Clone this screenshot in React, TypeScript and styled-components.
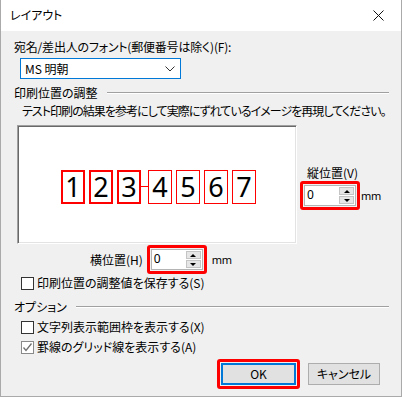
import React from 'react';
import styled, { createGlobalStyle, css } from 'styled-components';

const GlobalStyle = createGlobalStyle`
  html, body {
    margin: 0;
    padding: 0;
    background: #ffffff;
  }
  body {
    font-family: "Noto Sans CJK JP", "Noto Sans", sans-serif;
    font-size: 12px;
    color: #000;
    font-feature-settings: "palt";
  }
`;

const digits = ['1', '2', '3', '4', '5', '6', '7'];

const ChevronDown = () => (
  <svg width="10" height="6" viewBox="0 0 10 6">
    <polyline points="0.5,0.5 5,5 9.5,0.5" fill="none" stroke="#333" strokeWidth="1" />
  </svg>
);

const CloseIcon = () => (
  <svg width="11" height="11" viewBox="0 0 11 11">
    <path d="M0.5 0.5 L10.5 10.5 M10.5 0.5 L0.5 10.5" stroke="#111" strokeWidth="1" />
  </svg>
);

const CheckMark = () => (
  <svg width="11" height="11" viewBox="0 0 11 11">
    <polyline points="1.5,5.5 4,8.5 9.5,1.5" fill="none" stroke="#707070" strokeWidth="1.3" />
  </svg>
);

const Spin = ({ value }: { value: string }) => (
  <Highlight>
    <SpinBox>
      <SpinValue>{value}</SpinValue>
      <SpinButtons>
        <SpinBtn>
          <Arrow $up />
        </SpinBtn>
        <SpinBtn>
          <Arrow />
        </SpinBtn>
      </SpinButtons>
    </SpinBox>
  </Highlight>
);

const CheckRow = ({ label, checked }: { label: string; checked?: boolean }) => (
  <CheckLine>
    <Box $checked={checked}>{checked && <CheckMark />}</Box>
    <span>{label}</span>
  </CheckLine>
);

export default function App() {
  return (
    <>
      <GlobalStyle />
      <Window>
        <TitleBar>
          <Title>レイアウト</Title>
          <CloseButton>
            <CloseIcon />
          </CloseButton>
        </TitleBar>
        <Body>
          <Label>宛名/差出人のフォント(郵便番号は除く)(F):</Label>
          <Select>
            <span>MS 明朝</span>
            <ChevronDown />
          </Select>

          <GroupHead>
            <span>印刷位置の調整</span>
            <Rule />
          </GroupHead>
          <Description>テスト印刷の結果を参考にして実際にずれているイメージを再現してください。</Description>

          <PreviewRow>
            <Preview>
              <DigitStrip>
                {digits.map((d, i) => (
                  <React.Fragment key={d}>
                    {i === 3 && <Connector />}
                    <DigitBox $thick={i < 3}>{d}</DigitBox>
                  </React.Fragment>
                ))}
              </DigitStrip>
            </Preview>
            <VerticalCol>
              <SideLabel>縦位置(V)</SideLabel>
              <SpinLine>
                <Spin value="0" />
                <Unit>mm</Unit>
              </SpinLine>
            </VerticalCol>
          </PreviewRow>

          <HorizontalRow>
            <span>横位置(H)</span>
            <Spin value="0" />
            <Unit>mm</Unit>
          </HorizontalRow>

          <CheckRow label="印刷位置の調整値を保存する(S)" />

          <GroupHead $gap={8}>
            <span>オプション</span>
            <Rule />
          </GroupHead>
          <OptionList>
            <CheckRow label="文字列表示範囲枠を表示する(X)" />
            <CheckRow label="罫線のグリッド線を表示する(A)" checked />
          </OptionList>

          <ButtonRow>
            <Highlight>
              <Button $primary>OK</Button>
            </Highlight>
            <Button>キャンセル</Button>
          </ButtonRow>
        </Body>
      </Window>
    </>
  );
}

const Window = styled.div`
  box-sizing: border-box;
  width: 402px;
  height: 397px;
  background: #f0f0f0;
  border: 1px solid #aaaaaa;
  border-top: none;
  display: flex;
  flex-direction: column;
`;

const TitleBar = styled.div`
  height: 31px;
  background: #ffffff;
  display: flex;
  align-items: center;
  justify-content: space-between;
  padding-left: 9px;
`;

const Title = styled.div`
  font-size: 12px;
  line-height: 16px;
  margin-top: -1px;
`;

const CloseButton = styled.div`
  width: 46px;
  height: 31px;
  display: flex;
  align-items: center;
  justify-content: center;
  margin-top: -1px;
`;

const Body = styled.div`
  display: flex;
  flex-direction: column;
  align-items: flex-start;
  padding: 0 12px 0 13px;
  line-height: 16px;
  white-space: nowrap;
`;

const Label = styled.div`
  margin-top: 8px;
  letter-spacing: -0.2px;
`;

const Select = styled.div`
  box-sizing: border-box;
  margin: 3px 0 0 6px;
  width: 161px;
  height: 21px;
  border: 1px solid #0078d7;
  background: #fff;
  display: flex;
  align-items: center;
  justify-content: space-between;
  padding: 0 5px 0 4px;
  font-size: 12px;
`;

const GroupHead = styled.div<{ $gap?: number }>`
  align-self: stretch;
  display: flex;
  align-items: center;
  gap: 9px;
  margin-top: ${(p) => p.$gap ?? 6}px;
`;

const Rule = styled.div`
  flex: 1;
  height: 1px;
  background: #a0a0a0;
  box-shadow: 0 1px 0 #ffffff;
  margin-top: -1px;
`;

const Description = styled.div`
  margin: 2px 0 0 8px;
  letter-spacing: -0.95px;
`;

const PreviewRow = styled.div`
  display: flex;
  margin-top: 6px;
`;

const Preview = styled.div`
  box-sizing: border-box;
  margin-left: 3px;
  width: 280px;
  height: 119px;
  background: #fff;
  border-top: 1px solid #a0a0a0;
  border-left: 1px solid #a0a0a0;
  border-right: 1px solid #ffffff;
  border-bottom: 1px solid #ffffff;
  box-shadow: inset 1px 1px 0 #696969, inset -1px -1px 0 #e3e3e3;
  display: flex;
  align-items: center;
  justify-content: center;
  padding-left: 3px;
`;

const DigitStrip = styled.div`
  display: flex;
  align-items: center;
  gap: 4px;
  margin-top: 4px;
`;

const DigitBox = styled.div<{ $thick?: boolean }>`
  box-sizing: border-box;
  width: 24px;
  height: 34px;
  border: ${(p) => (p.$thick ? 2 : 1)}px solid #ff0000;
  display: flex;
  align-items: center;
  justify-content: center;
  font-family: "Noto Sans", "DejaVu Sans", sans-serif;
  font-size: 27px;
  line-height: 1;
  padding-bottom: 1px;
`;

const Connector = styled.div`
  width: 7px;
  height: 1px;
  background: #ff0000;
  margin: 0 -4px;
`;

const VerticalCol = styled.div`
  display: flex;
  flex-direction: column;
  align-items: flex-start;
  padding-top: 40px;
  margin-left: 3px;
`;

const SideLabel = styled.div`
  margin-left: 7px;
`;

const SpinLine = styled.div`
  display: flex;
  align-items: center;
`;

const Unit = styled.span`
  font-family: "Noto Sans", sans-serif;
  font-size: 11px;
  letter-spacing: -0.3px;
  margin-left: 1px;
  margin-top: 1px;
`;

const Highlight = styled.div`
  display: inline-flex;
  padding: 1px;
  border: 3px solid #ff0000;
  border-radius: 3px;
`;

const SpinBox = styled.div`
  box-sizing: border-box;
  width: 52px;
  height: 21px;
  border: 1px solid #b4b4b4;
  background: #fff;
  display: flex;
`;

const SpinValue = styled.div`
  flex: 1;
  padding-left: 2px;
  line-height: 18px;
  font-family: "Noto Sans", sans-serif;
  font-size: 12px;
`;

const SpinButtons = styled.div`
  width: 15px;
  display: flex;
  flex-direction: column;
  gap: 1px;
  padding: 1px 1px 1px 0;
`;

const SpinBtn = styled.div`
  flex: 1;
  background: #e6e6e6;
  border: 1px solid #c4c4c4;
  display: flex;
  align-items: center;
  justify-content: center;
`;

const Arrow = styled.div<{ $up?: boolean }>`
  width: 0;
  height: 0;
  border-left: 3px solid transparent;
  border-right: 3px solid transparent;
  ${(p) =>
    p.$up
      ? css`
          border-bottom: 3px solid #000;
        `
      : css`
          border-top: 3px solid #000;
        `}
`;

const HorizontalRow = styled.div`
  display: flex;
  align-items: center;
  margin: 1px 0 0 76px;
  gap: 4px;
`;

const CheckLine = styled.div`
  display: flex;
  align-items: center;
  gap: 3px;
  margin: 1px 0 0 7px;
  height: 16px;
`;

const Box = styled.div<{ $checked?: boolean }>`
  box-sizing: border-box;
  width: 13px;
  height: 13px;
  background: #fff;
  border: 1px solid ${(p) => (p.$checked ? '#8a8a8a' : '#333333')};
  display: flex;
  align-items: center;
  justify-content: center;
`;

const OptionList = styled.div`
  display: flex;
  flex-direction: column;
  gap: 3px;
  margin-top: 3px;
`;

const ButtonRow = styled.div`
  align-self: stretch;
  display: flex;
  justify-content: flex-end;
  align-items: center;
  gap: 8px;
  margin-top: 4px;
  padding-right: 9px;
`;

const Button = styled.div<{ $primary?: boolean }>`
  box-sizing: border-box;
  width: ${(p) => (p.$primary ? 75 : 72)}px;
  height: 22px;
  background: #e1e1e1;
  border: ${(p) => (p.$primary ? '2px solid #0078d7' : '1px solid #adadad')};
  display: flex;
  align-items: center;
  justify-content: center;
  font-size: 12px;
`;
